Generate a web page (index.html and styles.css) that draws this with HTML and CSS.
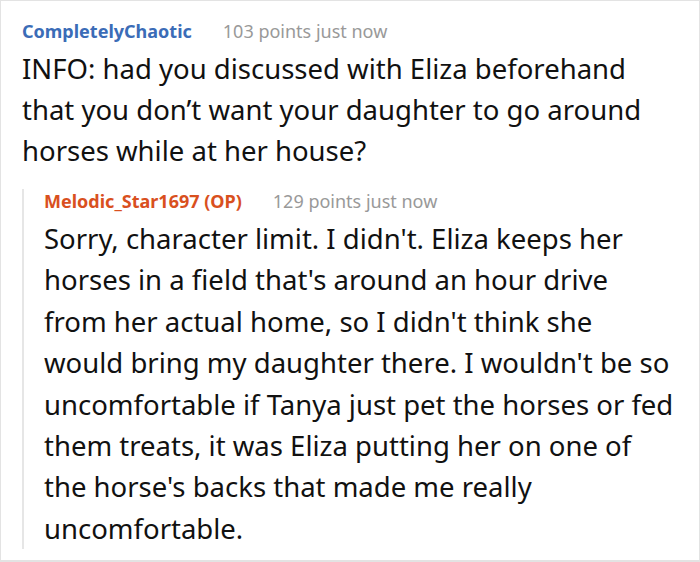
FILE: index.html
```html
<!DOCTYPE html>
<html>
<head>
<meta charset="utf-8">
<link rel="stylesheet" href="styles.css">
</head>
<body>
<div class="frame">
  <div class="comment">
    <div class="meta">
      <span class="user user-blue">CompletelyChaotic</span>
      <span class="points">103 points just now</span>
    </div>
    <div class="text">INFO: had you discussed with Eliza beforehand<br>that you don’t want your daughter to go around<br>horses while at her house?</div>
    <div class="reply">
      <div class="meta">
        <span class="user user-orange">Melodic_Star1697 (OP)</span>
        <span class="points">129 points just now</span>
      </div>
      <div class="text">Sorry, character limit. I didn't. Eliza keeps her<br>horses in a field that's around an hour drive<br>from her actual home, so I didn't think she<br>would bring my daughter there. I wouldn't be so<br>uncomfortable if Tanya just pet the horses or fed<br>them treats, it was Eliza putting her on one of<br>the horse's backs that made me really<br>uncomfortable.</div>
    </div>
  </div>
</div>
</body>
</html>
```

FILE: styles.css
```css
html, body {
  margin: 0;
  padding: 0;
  background: #ffffff;
}
.frame {
  box-sizing: border-box;
  width: 700px;
  height: 562px;
  border: 1px solid #e3e3e3;
  border-bottom-width: 2px;
  padding: 18px 0 0 21px;
  font-family: "Noto Sans", "Open Sans", sans-serif;
  overflow: hidden;
}
.meta {
  display: flex;
  gap: 31px;
  font-size: 18px;
  line-height: 24px;
  white-space: nowrap;
}
.user {
  font-weight: 700;
}
.user-blue {
  color: #3b6cb7;
}
.user-orange {
  color: #d9501e;
}
.points {
  color: #999999;
}
.text {
  font-size: 27.5px;
  line-height: 41px;
  color: #111111;
  margin-top: 5px;
  white-space: nowrap;
}
.reply {
  margin-top: 18px;
  border-left: 2px solid #e6e6e6;
  padding-left: 20px;
}
.reply .text {
  line-height: 41.4px;
  margin-top: 5px;
}
```
